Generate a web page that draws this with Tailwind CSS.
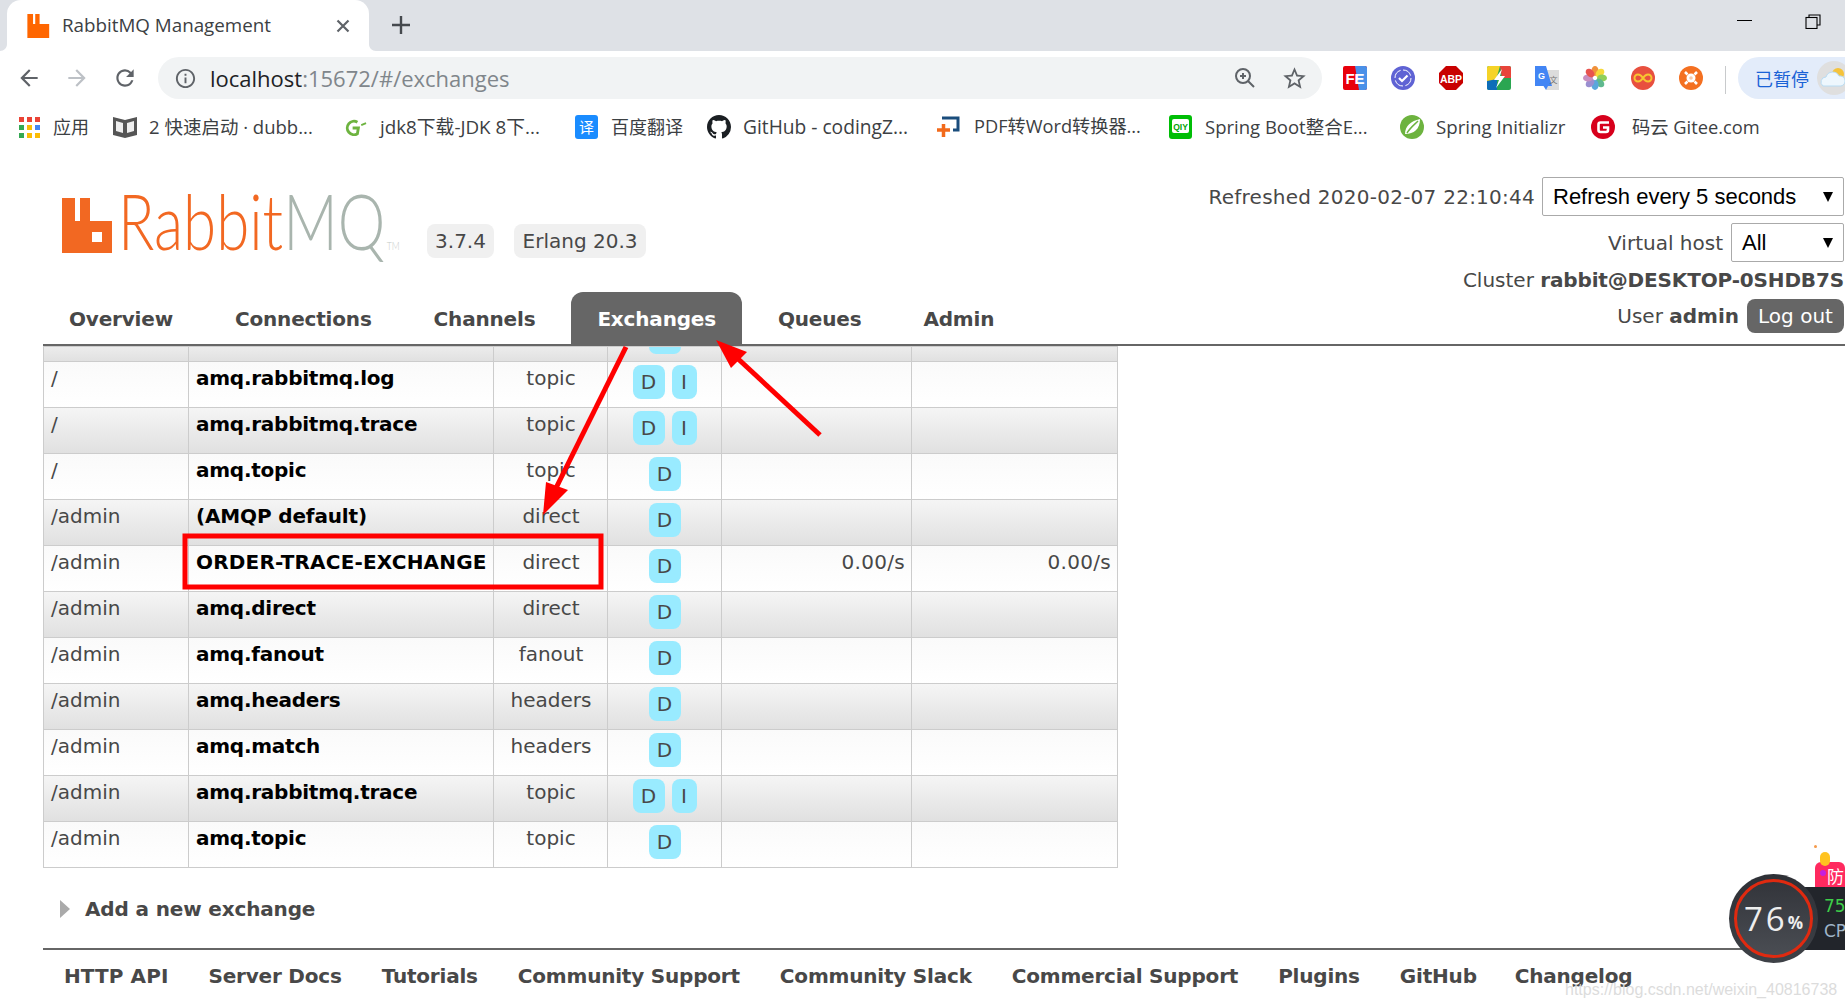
<!DOCTYPE html>
<html lang="en">
<head>
    <meta charset="UTF-8">
    <title>RabbitMQ Management</title>
    <script src="https://cdn.jsdelivr.net/npm/@tailwindcss/browser@4"></script>
</head>
<body class="relative w-[1845px] h-[1008px] overflow-hidden bg-white font-['DejaVu_Sans','Noto_Sans_CJK_SC',sans-serif] text-[20px] text-[#484848]">

    <!-- Tab strip -->
    <div class="relative flex h-[51px] bg-[#dee1e6]">
        <div class="relative ml-[7px] flex h-[51px] w-[362px] items-center rounded-t-[14px] bg-white pl-[20px] font-['Open_Sans',sans-serif] text-[#3c4043]">
            <svg class="absolute -left-[7px] bottom-0" width="7" height="7" viewBox="0 0 7 7"><path d="M7 0V7H0C4 7 7 4 7 0z" fill="#fff"/></svg>
            <svg class="absolute -right-[7px] bottom-0" width="7" height="7" viewBox="0 0 7 7"><path d="M0 0V7H7C3 7 0 4 0 0z" fill="#fff"/></svg>
            <svg width="23" height="24" viewBox="0 0 51 55"><path d="M0 0H13V23H18V0H28V23H50V55H0z" fill="#ff6600"/></svg>
            <span class="ml-[12px] w-[222px] whitespace-nowrap text-[18.8px] leading-none">RabbitMQ Management</span>
            <svg class="ml-[52px]" width="14" height="14" viewBox="0 0 14 14"><path d="M1.500 1.500L12.500 12.500M12.500 1.500L1.500 12.500" stroke="#5f6368" stroke-width="2.200"/></svg>
        </div>
        <svg class="ml-[23px] mt-[16px]" width="18" height="18" viewBox="0 0 18 18"><path d="M9 0V18M0 9H18" stroke="#45494e" stroke-width="2.400"/></svg>
        <div class="absolute left-[1737px] top-[20px] h-[1px] w-[15px] bg-black"></div>
        <svg class="absolute left-[1805px] top-[14px]" width="16" height="15" viewBox="0 0 16 15" fill="none" stroke="#000" stroke-width="1.100"><path d="M4 3V1H15V11H12"/><rect x="1" y="3.500" width="11" height="11"/></svg>
    </div>

    <!-- Toolbar -->
    <div class="relative flex h-[54px] items-start pt-[6px]">
        <div class="flex w-[158px] h-[42px] shrink-0 items-center pl-[16px] gap-[22px]">
            <svg width="26" height="26" viewBox="0 0 24 24"><path d="M20 11H7.830l5.590-5.590L12 4l-8 8 8 8 1.410-1.410L7.830 13H20z" fill="#5f6368"/></svg>
            <svg width="26" height="26" viewBox="0 0 24 24"><path d="M4 11h12.170l-5.590-5.590L12 4l8 8-8 8-1.410-1.410L16.170 13H4z" fill="#bdc1c6"/></svg>
            <svg width="26" height="26" viewBox="0 0 24 24"><path d="M17.650 6.350A7.958 7.958 0 0012 4c-4.420 0-7.990 3.580-7.990 8s3.570 8 7.990 8c3.730 0 6.840-2.550 7.730-6h-2.080A5.990 5.990 0 0112 18c-3.310 0-6-2.690-6-6s2.690-6 6-6c1.660 0 3.140.690 4.220 1.780L13 11h7V4l-2.350 2.350z" fill="#5f6368"/></svg>
        </div>
        <div class="flex h-[42px] w-[1164px] shrink-0 items-center rounded-full bg-[#f1f3f4] pl-[16px] font-['Open_Sans',sans-serif]">
            <svg width="23" height="23" viewBox="0 0 24 24"><path d="M11 7h2v2h-2zm0 4h2v6h-2zm1-9C6.480 2 2 6.480 2 12s4.480 10 10 10 10-4.480 10-10S17.520 2 12 2zm0 18c-4.410 0-8-3.590-8-8s3.590-8 8-8 8 3.590 8 8-3.590 8-8 8z" fill="#5f6368"/></svg>
            <span class="ml-[13px] text-[22px] leading-none text-[#202124]">localhost<span class="text-[#80868b]">:15672/#/exchanges</span></span>
            <svg class="ml-auto" width="24" height="24" viewBox="0 0 24 24" fill="none" stroke="#5f6368" stroke-width="2"><circle cx="10" cy="10" r="7"/><path d="M15 15L21 21M7 10H13M10 7V13"/></svg>
            <svg class="ml-[24px] mr-[14px]" width="27" height="27" viewBox="0 0 24 24"><path d="M22 9.240l-7.190-.620L12 2 9.190 8.630 2 9.240l5.460 4.730L5.820 21 12 17.270 18.180 21l-1.630-7.030L22 9.240zM12 15.400l-3.760 2.270 1-4.280-3.320-2.880 4.380-.380L12 6.100l1.710 4.040 4.380.380-3.320 2.880 1 4.280L12 15.400z" fill="#5f6368"/></svg>
        </div>
        <!-- Extensions -->
        <div class="flex h-[42px] shrink-0 items-center pl-[21px] gap-[24px]">
            <svg width="24" height="24" viewBox="0 0 24 24"><rect width="24" height="24" rx="2" fill="#e8000c"/><path d="M12 0H22a2 2 0 012 2V22a2 2 0 01-2 2H16z" fill="#4a90e8"/><text x="12" y="18" font-family="Liberation Sans" font-weight="700" font-size="15" fill="#fff" text-anchor="middle">FE</text></svg>
            <svg width="24" height="24" viewBox="0 0 24 24"><circle cx="12" cy="12" r="12" fill="#5f63d4"/><circle cx="12" cy="12" r="8" fill="none" stroke="#fff" stroke-width="1" stroke-dasharray="10 2.500"/><path d="M8 12L11 15L16.500 9.500" fill="none" stroke="#fff" stroke-width="2.200"/></svg>
            <svg width="24" height="24" viewBox="0 0 24 24"><path d="M7 0H17L24 7V17L17 24H7L0 17V7z" fill="#c80000"/><text x="12" y="16.500" font-family="Liberation Sans" font-weight="700" font-size="10.500" fill="#fff" text-anchor="middle">ABP</text></svg>
            <svg width="24" height="24" viewBox="0 0 24 24"><rect width="24" height="24" rx="2" fill="#2aa651"/><path d="M0 2a2 2 0 012-2H13L9 14L0 17z" fill="#f5d327"/><path d="M13 0H22a2 2 0 012 2V12H15z" fill="#e8443a"/><path d="M0 15L10 13V24H2a2 2 0 01-2-2z" fill="#0e6db8"/><path d="M15 3L7 14H12L9 22L18 10H13z" fill="#fff"/></svg>
            <svg width="24" height="24" viewBox="0 0 24 24"><rect x="11" y="4" width="13" height="20" fill="#dcdcdc"/><path d="M0 0H11L17 20H13L11 24L8.500 20H0z" fill="#4285f4"/><text x="6.500" y="13" font-family="Liberation Sans" font-weight="700" font-size="9" fill="#fff" text-anchor="middle">G</text><text x="18.500" y="17" font-family="Noto Sans CJK SC" font-size="8" fill="#777" text-anchor="middle">文</text></svg>
            <svg width="24" height="24" viewBox="0 0 24 24"><g transform="translate(12 12)"><ellipse cy="-7" rx="3.600" ry="5" fill="#f0913a"/><ellipse cy="-7" rx="3.600" ry="5" fill="#f6d93a" transform="rotate(45)"/><ellipse cy="-7" rx="3.600" ry="5" fill="#8fcf5a" transform="rotate(90)"/><ellipse cy="-7" rx="3.600" ry="5" fill="#5fb98f" transform="rotate(135)"/><ellipse cy="-7" rx="3.600" ry="5" fill="#5aa7dc" transform="rotate(180)"/><ellipse cy="-7" rx="3.600" ry="5" fill="#9a8fd0" transform="rotate(225)"/><ellipse cy="-7" rx="3.600" ry="5" fill="#c88fc0" transform="rotate(270)"/><ellipse cy="-7" rx="3.600" ry="5" fill="#e8534e" transform="rotate(315)"/></g></svg>
            <svg width="24" height="24" viewBox="0 0 24 24"><circle cx="12" cy="12" r="12" fill="#e8503f"/><path d="M12 12C10 9 8.500 8.500 7 8.500a3.500 3.500 0 000 7C8.500 15.500 10 15 12 12C14 9 15.500 8.500 17 8.500a3.500 3.500 0 010 7C15.500 15.500 14 15 12 12z" fill="none" stroke="#f7c531" stroke-width="2"/></svg>
            <svg width="24" height="24" viewBox="0 0 24 24"><circle cx="12" cy="12" r="12" fill="#f47021"/><circle cx="12" cy="12" r="4.500" fill="#fff"/><circle cx="12" cy="12" r="1.800" fill="#f9c8a8"/><path d="M6 6L8.500 8.500M18 6L15.500 8.500M6 18L8.500 15.500M18 18L15.500 15.500" stroke="#fff" stroke-width="2.600"/></svg>
        </div>
        <div class="ml-[22px] mt-[9px] h-[28px] w-[1px] shrink-0 bg-[#c8cacc]"></div>
        <div class="ml-[12px] flex h-[42px] w-[140px] shrink-0 items-center rounded-l-full bg-[#e3ecfa] pl-[17px] font-['Noto_Sans_CJK_SC',sans-serif] text-[18px] text-[#1a62d6]">
            已暂停
            <svg class="ml-[8px] shrink-0" width="34" height="34" viewBox="0 0 34 34"><circle cx="17" cy="17" r="17" fill="#dfdfdf"/><circle cx="21" cy="13" r="6" fill="#f5c33b"/><path d="M6 25a5 5 0 013-9 7 7 0 0113-1 5 5 0 012 10z" fill="#eef7fd" stroke="#b9dcf3"/></svg>
        </div>
    </div>

    <!-- Bookmarks -->
    <div class="flex h-[44px] items-center pl-[19px] font-['Open_Sans','Noto_Sans_CJK_SC',sans-serif] text-[18px] text-[#3c4043]">
        <div class="flex w-[94px] shrink-0 items-center gap-[13px]">
            <svg width="21" height="21" viewBox="0 0 21 21"><path d="M0 0h5v5H0z" fill="#ea4335"/><path d="M8 0h5v5H8z" fill="#ea4335"/><path d="M16 0h5v5h-5z" fill="#ea4335"/><path d="M0 8h5v5H0z" fill="#34a853"/><path d="M8 8h5v5H8z" fill="#fbbc05"/><path d="M16 8h5v5h-5z" fill="#4285f4"/><path d="M0 16h5v5H0z" fill="#34a853"/><path d="M8 16h5v5H8z" fill="#fbbc05"/><path d="M16 16h5v5h-5z" fill="#fbbc05"/></svg>
            <span>应用</span>
        </div>
        <div class="flex w-[231px] shrink-0 items-center gap-[12px]">
            <svg width="24" height="24" viewBox="0 0 24 24"><path d="M0 2L12 5L24 2V20L12 23L0 20z" fill="#555"/><path d="M3 6L10 8V18L3 16zM21 6L14 8V18L21 16z" fill="#eee"/></svg>
            <span class="text-[18.5px]">2 快速启动 · dubb...</span>
        </div>
        <div class="flex w-[231px] shrink-0 items-center gap-[13px]">
            <svg width="23" height="24" viewBox="0 0 24 24" fill="none" stroke="#6db33f" stroke-width="3"><path d="M14 7a7 7 0 100 12l1-6H9"/><path d="M18 10L23 8" stroke-width="2"/></svg>
            <span class="text-[18.8px]">jdk8下载-JDK 8下...</span>
        </div>
        <div class="flex w-[132px] shrink-0 items-center gap-[13px]">
            <svg width="23" height="24" viewBox="0 0 23 24"><rect width="23" height="24" rx="3" fill="#1a8cff"/><text x="11.500" y="18" font-family="Noto Sans CJK SC" font-size="15" fill="#fff" text-anchor="middle">译</text></svg>
            <span>百度翻译</span>
        </div>
        <div class="flex w-[230px] shrink-0 items-center gap-[12px]">
            <svg width="24" height="24" viewBox="0 0 16 16"><path d="M8 0C3.580 0 0 3.580 0 8c0 3.540 2.290 6.530 5.470 7.590.400.070.550-.170.550-.380 0-.190-.010-.820-.010-1.490-2.010.370-2.530-.490-2.690-.940-.090-.230-.480-.940-.820-1.130-.280-.150-.680-.520-.010-.530.630-.010 1.080.580 1.230.820.720 1.210 1.870.870 2.330.660.070-.520.280-.870.510-1.070-1.780-.200-3.640-.890-3.640-3.950 0-.870.310-1.590.820-2.150-.080-.200-.360-1.020.080-2.120 0 0 .670-.210 2.200.820.640-.180 1.320-.270 2-.270.680 0 1.360.090 2 .270 1.530-1.040 2.200-.820 2.200-.820.440 1.100.160 1.920.080 2.120.510.560.820 1.270.820 2.150 0 3.070-1.870 3.750-3.650 3.950.290.250.540.730.540 1.480 0 1.070-.010 1.930-.010 2.200 0 .210.150.460.550.380A8.013 8.013 0 0016 8c0-4.420-3.580-8-8-8z" fill="#1b1f23"/></svg>
            <span class="text-[19.2px]">GitHub - codingZ...</span>
        </div>
        <div class="flex w-[232px] shrink-0 items-center gap-[14px]">
            <svg width="23" height="24" viewBox="0 0 23 24" fill="none"><path d="M5 3H21V15H16" stroke="#1a4d7c" stroke-width="3"/><path d="M0 15H13M6.500 9V22" stroke="#f26a1b" stroke-width="3.500"/></svg>
            <span class="text-[18.2px]">PDF转Word转换器...</span>
        </div>
        <div class="flex w-[231px] shrink-0 items-center gap-[13px]">
            <svg width="23" height="24" viewBox="0 0 23 24"><rect width="23" height="24" rx="3" fill="#00be06"/><rect x="3" y="4" width="17" height="14" rx="2" fill="#fff"/><text x="11.500" y="15" font-family="Liberation Sans" font-weight="700" font-size="8.500" fill="#00a505" text-anchor="middle">QIY</text></svg>
            <span class="text-[18.5px]">Spring Boot整合E...</span>
        </div>
        <div class="flex w-[191px] shrink-0 items-center gap-[12px]">
            <svg width="24" height="24" viewBox="0 0 24 24"><circle cx="12" cy="12" r="12" fill="#6db33f"/><path d="M20 4C20 14 14 19 5 19C5 11 11 6 20 4z" fill="#fff"/><path d="M7 18C10 13 14 10 18 6" stroke="#6db33f" stroke-width="1.500" fill="none"/></svg>
            <span class="text-[18.7px]">Spring Initializr</span>
        </div>
        <div class="flex shrink-0 items-center gap-[17px]">
            <svg width="24" height="24" viewBox="0 0 24 24"><circle cx="12" cy="12" r="12" fill="#d7001c"/><path d="M18 7.500H9.500a2 2 0 00-2 2V15a2 2 0 002 2H15a2 2 0 002-2V12.500H12" fill="none" stroke="#fff" stroke-width="2.600"/></svg>
            <span class="text-[18.3px]">码云 Gitee.com</span>
        </div>
    </div>

    <!-- Header -->
    <div class="ml-[43px] flex h-[197px] justify-between border-b-2 border-[#666] pr-[1px]">
        <div class="flex flex-col justify-between">
            <div class="ml-[19px] mt-[48px] flex items-start">
                <svg class="mt-[1px] shrink-0" width="51" height="55" viewBox="0 0 51 55"><path fill-rule="evenodd" d="M0 0H13V23H18V0H28V23H50V55H0zM30 34V44H40V34z" fill="#f26822"/></svg>
                <div class="ml-[5px] flex h-[54px] w-[309px] shrink-0 items-end font-['Lato',sans-serif] font-light text-[76px] leading-[54px]">
                    <span class="origin-left scale-x-[0.79] whitespace-nowrap"><span class="text-[#f26822]">Rabbit</span><span class="text-[#a9b5ae]">MQ</span><span class="ml-[2px] text-[11px] leading-none text-[#c4c9c6]">TM</span></span>
                </div>
                <div class="mt-[27px] flex h-[34px] w-[67px] items-center justify-center rounded-[8px] bg-[#f0f0f0]">3.7.4</div>
                <div class="ml-[20px] mt-[27px] flex h-[34px] w-[132px] items-center justify-center rounded-[8px] bg-[#f0f0f0]">Erlang 20.3</div>
            </div>
            <nav class="flex gap-[10px] font-bold tracking-[-0.18px]">
                <a class="flex h-[52px] items-center px-[26px] pt-[1px]">Overview</a>
                <a class="flex h-[52px] items-center px-[26px] pt-[1px]">Connections</a>
                <a class="flex h-[52px] items-center px-[26px] pt-[1px]">Channels</a>
                <a class="flex h-[52px] items-center rounded-t-[12px] bg-[#666] px-[26px] pt-[1px] text-white">Exchanges</a>
                <a class="flex h-[52px] items-center px-[26px] pt-[1px]">Queues</a>
                <a class="flex h-[52px] items-center px-[26px] pt-[1px]">Admin</a>
            </nav>
        </div>
        <div class="flex flex-col items-end pt-[28px]">
            <div class="flex items-center gap-[7px]">
                <span class="tracking-[0.25px]">Refreshed 2020-02-07 22:10:44</span>
                <div class="flex h-[39px] w-[302px] items-center justify-between rounded-[2px] border border-[#aaa] pl-[10px] pr-[10px] font-['Liberation_Sans',sans-serif] text-[22px] text-black">
                    Refresh every 5 seconds
                    <svg width="10" height="10" viewBox="0 0 10 10"><path d="M0 0H10L5 10z" fill="#000"/></svg>
                </div>
            </div>
            <div class="mt-[7px] flex items-center gap-[8px]">
                <span>Virtual host</span>
                <div class="flex h-[39px] w-[113px] items-center justify-between rounded-[2px] border border-[#aaa] pl-[10px] pr-[10px] font-['Liberation_Sans',sans-serif] text-[22px] text-black">
                    All
                    <svg width="10" height="10" viewBox="0 0 10 10"><path d="M0 0H10L5 10z" fill="#000"/></svg>
                </div>
            </div>
            <div class="mt-[5px] h-[26px] whitespace-nowrap leading-[26px]">Cluster <b class="tracking-[-0.15px]">rabbit@DESKTOP-0SHDB7S</b></div>
            <div class="mt-[6px] flex items-center gap-[8px]">
                <span>User <b>admin</b></span>
                <span class="flex h-[34px] w-[97px] items-center justify-center rounded-[8px] bg-[#666] text-white">Log out</span>
            </div>
        </div>
    </div>

    <!-- Exchanges table -->
    <table class="ml-[43px] w-[1075px] table-fixed border-collapse">
        <colgroup>
            <col class="w-[145px]"><col class="w-[305px]"><col class="w-[114px]"><col class="w-[114px]"><col class="w-[190px]"><col class="w-[206px]">
        </colgroup>
        <tbody>
            <tr class="h-[14px] bg-linear-to-b from-[#ececec] to-[#e0e0e0]">
                <td class="border border-[#ccc] p-0"></td><td class="border border-[#ccc] p-0"></td><td class="border border-[#ccc] p-0"></td>
                <td class="border border-[#ccc] p-0"><div class="h-[14px] overflow-hidden"><div class="mx-auto -mt-[7px] h-[14px] w-[32px] rounded-[8px] bg-[#99ebff]"></div></div></td>
                <td class="border border-[#ccc] p-0"></td><td class="border border-[#ccc] p-0"></td>
            </tr>
            <tr class="h-[46px] bg-linear-to-b from-[#fafafa] to-white">
                <td class="border border-[#ccc] px-[7px] pb-[13px]">/</td><td class="border border-[#ccc] px-[7px] pb-[13px] font-bold text-black tracking-[-0.25px]">amq.rabbitmq.log</td><td class="border border-[#ccc] pb-[13px] pl-[1px] text-center">topic</td>
                <td class="border border-[#ccc] pb-[6px]"><div class="flex justify-center gap-[7px]"><span class="flex h-[34px] w-[32px] items-center justify-center rounded-[8px] bg-[#99ebff]">D</span><span class="flex h-[34px] w-[25px] items-center justify-center rounded-[8px] bg-[#99ebff]">I</span></div></td>
                <td class="border border-[#ccc]"></td><td class="border border-[#ccc]"></td>
            </tr>
            <tr class="h-[46px] bg-linear-to-b from-[#f5f5f5] to-[#e0e0e0]">
                <td class="border border-[#ccc] px-[7px] pb-[13px]">/</td><td class="border border-[#ccc] px-[7px] pb-[13px] font-bold text-black tracking-[-0.25px]">amq.rabbitmq.trace</td><td class="border border-[#ccc] pb-[13px] pl-[1px] text-center">topic</td>
                <td class="border border-[#ccc] pb-[6px]"><div class="flex justify-center gap-[7px]"><span class="flex h-[34px] w-[32px] items-center justify-center rounded-[8px] bg-[#99ebff]">D</span><span class="flex h-[34px] w-[25px] items-center justify-center rounded-[8px] bg-[#99ebff]">I</span></div></td>
                <td class="border border-[#ccc]"></td><td class="border border-[#ccc]"></td>
            </tr>
            <tr class="h-[46px] bg-linear-to-b from-[#fafafa] to-white">
                <td class="border border-[#ccc] px-[7px] pb-[13px]">/</td><td class="border border-[#ccc] px-[7px] pb-[13px] font-bold text-black tracking-[-0.25px]">amq.topic</td><td class="border border-[#ccc] pb-[13px] pl-[1px] text-center">topic</td>
                <td class="border border-[#ccc] pb-[6px]"><div class="flex justify-center"><span class="flex h-[34px] w-[32px] items-center justify-center rounded-[8px] bg-[#99ebff]">D</span></div></td>
                <td class="border border-[#ccc]"></td><td class="border border-[#ccc]"></td>
            </tr>
            <tr class="h-[46px] bg-linear-to-b from-[#f5f5f5] to-[#e0e0e0]">
                <td class="border border-[#ccc] px-[7px] pb-[13px]">/admin</td><td class="border border-[#ccc] px-[7px] pb-[13px] font-bold text-black tracking-[-0.15px]">(AMQP default)</td><td class="border border-[#ccc] pb-[13px] pl-[1px] text-center">direct</td>
                <td class="border border-[#ccc] pb-[6px]"><div class="flex justify-center"><span class="flex h-[34px] w-[32px] items-center justify-center rounded-[8px] bg-[#99ebff]">D</span></div></td>
                <td class="border border-[#ccc]"></td><td class="border border-[#ccc]"></td>
            </tr>
            <tr class="h-[46px] bg-linear-to-b from-[#fafafa] to-white">
                <td class="border border-[#ccc] px-[7px] pb-[13px]">/admin</td><td class="border border-[#ccc] px-[7px] pb-[13px] font-bold text-black whitespace-nowrap tracking-[0.2px]">ORDER-TRACE-EXCHANGE</td><td class="border border-[#ccc] pb-[13px] pl-[1px] text-center">direct</td>
                <td class="border border-[#ccc] pb-[6px]"><div class="flex justify-center"><span class="flex h-[34px] w-[32px] items-center justify-center rounded-[8px] bg-[#99ebff]">D</span></div></td>
                <td class="border border-[#ccc] px-[6px] pb-[13px] text-right tracking-[0.3px]">0.00/s</td><td class="border border-[#ccc] px-[6px] pb-[13px] text-right tracking-[0.3px]">0.00/s</td>
            </tr>
            <tr class="h-[46px] bg-linear-to-b from-[#f5f5f5] to-[#e0e0e0]">
                <td class="border border-[#ccc] px-[7px] pb-[13px]">/admin</td><td class="border border-[#ccc] px-[7px] pb-[13px] font-bold text-black tracking-[-0.25px]">amq.direct</td><td class="border border-[#ccc] pb-[13px] pl-[1px] text-center">direct</td>
                <td class="border border-[#ccc] pb-[6px]"><div class="flex justify-center"><span class="flex h-[34px] w-[32px] items-center justify-center rounded-[8px] bg-[#99ebff]">D</span></div></td>
                <td class="border border-[#ccc]"></td><td class="border border-[#ccc]"></td>
            </tr>
            <tr class="h-[46px] bg-linear-to-b from-[#fafafa] to-white">
                <td class="border border-[#ccc] px-[7px] pb-[13px]">/admin</td><td class="border border-[#ccc] px-[7px] pb-[13px] font-bold text-black tracking-[-0.25px]">amq.fanout</td><td class="border border-[#ccc] pb-[13px] pl-[1px] text-center">fanout</td>
                <td class="border border-[#ccc] pb-[6px]"><div class="flex justify-center"><span class="flex h-[34px] w-[32px] items-center justify-center rounded-[8px] bg-[#99ebff]">D</span></div></td>
                <td class="border border-[#ccc]"></td><td class="border border-[#ccc]"></td>
            </tr>
            <tr class="h-[46px] bg-linear-to-b from-[#f5f5f5] to-[#e0e0e0]">
                <td class="border border-[#ccc] px-[7px] pb-[13px]">/admin</td><td class="border border-[#ccc] px-[7px] pb-[13px] font-bold text-black tracking-[-0.25px]">amq.headers</td><td class="border border-[#ccc] pb-[13px] pl-[1px] text-center">headers</td>
                <td class="border border-[#ccc] pb-[6px]"><div class="flex justify-center"><span class="flex h-[34px] w-[32px] items-center justify-center rounded-[8px] bg-[#99ebff]">D</span></div></td>
                <td class="border border-[#ccc]"></td><td class="border border-[#ccc]"></td>
            </tr>
            <tr class="h-[46px] bg-linear-to-b from-[#fafafa] to-white">
                <td class="border border-[#ccc] px-[7px] pb-[13px]">/admin</td><td class="border border-[#ccc] px-[7px] pb-[13px] font-bold text-black tracking-[-0.25px]">amq.match</td><td class="border border-[#ccc] pb-[13px] pl-[1px] text-center">headers</td>
                <td class="border border-[#ccc] pb-[6px]"><div class="flex justify-center"><span class="flex h-[34px] w-[32px] items-center justify-center rounded-[8px] bg-[#99ebff]">D</span></div></td>
                <td class="border border-[#ccc]"></td><td class="border border-[#ccc]"></td>
            </tr>
            <tr class="h-[46px] bg-linear-to-b from-[#f5f5f5] to-[#e0e0e0]">
                <td class="border border-[#ccc] px-[7px] pb-[13px]">/admin</td><td class="border border-[#ccc] px-[7px] pb-[13px] font-bold text-black tracking-[-0.25px]">amq.rabbitmq.trace</td><td class="border border-[#ccc] pb-[13px] pl-[1px] text-center">topic</td>
                <td class="border border-[#ccc] pb-[6px]"><div class="flex justify-center gap-[7px]"><span class="flex h-[34px] w-[32px] items-center justify-center rounded-[8px] bg-[#99ebff]">D</span><span class="flex h-[34px] w-[25px] items-center justify-center rounded-[8px] bg-[#99ebff]">I</span></div></td>
                <td class="border border-[#ccc]"></td><td class="border border-[#ccc]"></td>
            </tr>
            <tr class="h-[46px] bg-linear-to-b from-[#fafafa] to-white">
                <td class="border border-[#ccc] px-[7px] pb-[13px]">/admin</td><td class="border border-[#ccc] px-[7px] pb-[13px] font-bold text-black tracking-[-0.25px]">amq.topic</td><td class="border border-[#ccc] pb-[13px] pl-[1px] text-center">topic</td>
                <td class="border border-[#ccc] pb-[6px]"><div class="flex justify-center"><span class="flex h-[34px] w-[32px] items-center justify-center rounded-[8px] bg-[#99ebff]">D</span></div></td>
                <td class="border border-[#ccc]"></td><td class="border border-[#ccc]"></td>
            </tr>
        </tbody>
    </table>

    <!-- Add a new exchange -->
    <div class="ml-[60px] mt-[28px] flex h-[26px] items-center gap-[15px] font-bold tracking-[-0.15px]">
        <svg width="10" height="18" viewBox="0 0 10 18"><path d="M0 0L10 9L0 18z" fill="#aaa"/></svg>
        <span>Add a new exchange</span>
    </div>

    <!-- Footer -->
    <div class="ml-[43px] mt-[26px] flex gap-[40px] border-t-2 border-[#666] pl-[21px] pt-[11px] font-bold tracking-[-0.2px]">
        <span class="tracking-[0.1px]">HTTP API</span><span>Server Docs</span><span>Tutorials</span><span>Community Support</span><span>Community Slack</span><span>Commercial Support</span><span>Plugins</span><span>GitHub</span><span class="-ml-[2px]">Changelog</span>
    </div>

    <!-- Red annotations drawn over the screenshot -->
    <svg class="pointer-events-none absolute left-0 top-0" width="1845" height="1008" viewBox="0 0 1845 1008" fill="none">
        <rect x="185" y="536" width="416" height="51" stroke="#f00" stroke-width="5"/>
        <path d="M626 347L556 488" stroke="#f00" stroke-width="5"/>
        <path d="M543 515L546 482L568 490z" fill="#f00"/>
        <path d="M820 435L735 356" stroke="#f00" stroke-width="5"/>
        <path d="M716 340L747 352L731 368z" fill="#f00"/>
    </svg>

    <!-- Desktop monitor widget -->
    <div class="absolute left-[1815px] top-[862px] flex h-[26px] w-[30px] items-end justify-end rounded-t-[6px] bg-[#ff2a5f] pr-[1px] font-['Noto_Sans_CJK_SC',sans-serif] text-[17px] leading-[24px] text-white">防</div>
    <div class="absolute left-[1820px] top-[852px] h-[14px] w-[10px] rounded-[5px] bg-[#ffc320]"></div>
    <div class="absolute left-[1814px] top-[845px] h-[3px] w-[3px] rounded-full bg-[#f59a4a]"></div>
    <div class="absolute left-[1820px] top-[870px] h-[6px] w-[6px] rounded-full bg-[#c51fe0]"></div>
    <div class="absolute left-[1790px] top-[887px] h-[63px] w-[55px] bg-[#22252b] pl-[34px] pt-[9px] text-[17px] leading-[20px] text-[#3ecf4a] whitespace-nowrap overflow-hidden">75<div class="mt-[5px] text-[#9fb4c8]">CP</div></div>
    <div class="absolute left-[1729px] top-[874px] flex h-[89px] w-[89px] items-center justify-center rounded-full bg-linear-to-b from-[#2e3036] to-[#3e4147] font-['Open_Sans',sans-serif] text-white">
        <div class="flex h-[79px] w-[79px] items-center justify-center rounded-full border-[3px] border-[#e02a10] bg-linear-to-b from-[#33353b] to-[#4a4d53] text-[33px] leading-none text-[#eee]">
            <span class="tracking-[3px]">76</span><span class="mt-[8px] text-[17px] font-bold">%</span>
        </div>
    </div>

    <!-- Watermark -->
    <div class="absolute left-[1565px] top-[981px] font-['Liberation_Sans',sans-serif] text-[16px] leading-[18px] text-[#dcdcdc] whitespace-nowrap">https://blog.csdn.net/weixin_40816738</div>
</body>
</html>
